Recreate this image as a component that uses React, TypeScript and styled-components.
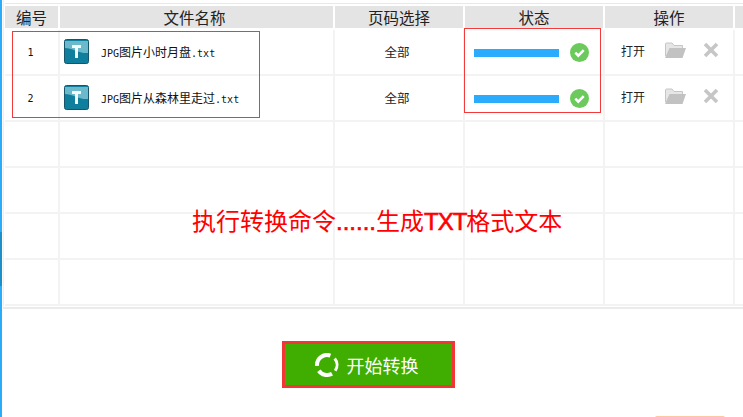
import React from "react";
import styled, { createGlobalStyle } from "styled-components";

const Global = createGlobalStyle`
  html, body { margin: 0; padding: 0; background: #fff; }
  #root { width: 743px; height: 417px; overflow: hidden; }
`;

const COLUMNS = "55px 275px 130px 140px 130px 10px";
const CJK = `"Noto Sans CJK SC", sans-serif`;

const Page = styled.div`
  position: relative;
  display: flex;
  width: 743px;
  height: 417px;
  overflow: hidden;
  background: #fff;
  font-family: ${CJK};
`;

const Strip = styled.div`
  flex: 0 0 2px;
  display: flex;
  flex-direction: column;
  background: #2aabfc;
  &::after {
    content: "";
    height: 54px;
    margin-top: 232px;
    background: #1c8fc9;
  }
`;

const Main = styled.div`
  flex: 1;
  display: flex;
  flex-direction: column;
  min-width: 0;
  padding-left: 1px;
`;

const Table = styled.div`
  position: relative;
  padding-top: 3px;
  border-left: 1px solid #f0f0f0;
  padding-left: 1px;
`;

const HeadRow = styled.div`
  display: grid;
  grid-template-columns: ${COLUMNS};
  height: 25px;
  border-top: 1px solid #e8e8e8;
  box-sizing: border-box;
  padding-top: 2px;
`;

const HeadCell = styled.div`
  display: flex;
  align-items: center;
  justify-content: center;
  margin-right: 2px;
  background: #e4e4e4;
  color: #222;
  font-size: 15.5px;
  line-height: 20px;
  &:nth-child(2) {
    padding-right: 4px;
  }
`;

const Row = styled.div`
  display: grid;
  grid-template-columns: ${COLUMNS};
  height: 46px;
  box-sizing: border-box;
  border-bottom: 2px solid #f3f3f3;
  &:nth-child(2) {
    height: 48px;
    padding-top: 2px;
  }
`;

const Cell = styled.div<{ $align?: string; $nudge?: number }>`
  display: flex;
  align-items: center;
  justify-content: ${(p) => p.$align ?? "center"};
  border-right: 2px solid #f3f3f3;
  padding-right: ${(p) => p.$nudge ?? 0}px;
  font-size: 12.5px;
  color: #222;
`;

const PageCell = styled(Cell)`
  padding-bottom: 2px;
`;

const IndexText = styled.span`
  font-family: "DejaVu Sans Mono", monospace;
  font-size: 10px;
  color: #111;
`;

const FileCell = styled(Cell)`
  padding: 0 0 1px 4px;
`;

const FileName = styled.span`
  margin-left: 12px;
  font-size: 12px;
  color: #111;
  white-space: nowrap;
`;

const Mono = styled.span`
  font-family: "DejaVu Sans Mono", monospace;
  font-size: 10px;
`;

const StatusCell = styled(Cell)`
  padding: 0 0 0 9px;
  gap: 11px;
`;

const Bar = styled.div`
  flex: 0 0 85px;
  height: 8px;
  background: #2aabfc;
  margin-top: 2px;
`;

const ActionCell = styled(Cell)`
  padding: 0 0 4px 16px;
`;

const OpenText = styled.span`
  width: 43px;
  font-size: 12px;
`;

const FolderIcon = styled.svg`
  width: 22px;
  height: 18px;
  margin-right: 17px;
`;

const CloseIcon = styled.svg`
  width: 16px;
  height: 16px;
`;

const Notice = styled.div`
  position: absolute;
  left: 188px;
  top: 205px;
  color: #ff0000;
  font-size: 24px;
  line-height: 30px;
  white-space: nowrap;
`;

const NoticeLatin = styled.span<{ $tight?: boolean }>`
  font-family: "Liberation Sans", sans-serif;
  font-size: 24px;
  letter-spacing: ${(p) => (p.$tight ? "-1px" : "0")};
  -webkit-text-stroke: 0.6px #ff0000;
`;

const Marker = styled.div<{ $left: number; $top: number; $w: number; $h: number }>`
  position: absolute;
  left: ${(p) => p.$left}px;
  top: ${(p) => p.$top}px;
  width: ${(p) => p.$w}px;
  height: ${(p) => p.$h}px;
  box-sizing: border-box;
  border: 1px solid #f23a3a;
`;

const Footer = styled.div`
  position: relative;
  flex: 1;
  display: flex;
  justify-content: center;
  align-items: flex-start;
  padding: 32px 9px 0 0;
  border-top: 2px solid #ebebeb;
  margin-top: 1px;
`;

const StartButton = styled.button`
  display: flex;
  align-items: center;
  justify-content: center;
  gap: 8px;
  width: 173px;
  height: 47px;
  padding: 0 4px 0 0;
  border: 3px solid #f23636;
  background: #3fae00;
  color: #fff;
  font-family: ${CJK};
  font-size: 18px;
`;

const SpinIcon = styled.svg`
  width: 24px;
  height: 24px;
`;

const PeekButton = styled.div`
  position: absolute;
  left: 652px;
  top: 107px;
  width: 70px;
  height: 10px;
  border-radius: 2px;
  background: #ffc9a0;
`;

const TileIcon = () => (
  <svg width="25" height="25" viewBox="0 0 25 25">
    <rect x="0.5" y="0.5" width="24" height="24" rx="2" fill="#0f7f9d" stroke="#17566a" />
    <path d="M1 2h23v12C16 15 8 9 1 9z" fill="#6bb9cb" />
    <path d="M8 6h9v3h-3v10h-3V9H8z" fill="#f2fbfd" />
  </svg>
);

const CheckIcon = () => (
  <svg width="19" height="19" viewBox="0 0 19 19">
    <circle cx="9.5" cy="9.5" r="9.5" fill="#6cc95c" />
    <path d="M5.3 9.6l3 3 5.4-5.4" fill="none" stroke="#fff" strokeWidth="2.6" />
  </svg>
);

const Folder = () => (
  <FolderIcon viewBox="0 0 22 18">
    <path d="M1.500 15V3a1 1 0 0 1 1-1H8l2 2.500h8.500V7" fill="#e6e6e6" stroke="#c6c6c6" />
    <path d="M5.500 7H22l-3.500 10H1z" fill="#c2c2c2" />
  </FolderIcon>
);

const Close = () => (
  <CloseIcon viewBox="0 0 16 16">
    <path d="M2 2l12 12M14 2L2 14" stroke="#c6c6c6" strokeWidth="3.600" />
  </CloseIcon>
);

const Spin = () => (
  <SpinIcon viewBox="0 0 24 24">
    <g fill="none" stroke="#fff">
      <path d="M2.040 12.870A10 10 0 0 1 15.420 2.600" strokeWidth="4" />
      <path d="M19.660 5.570A10 10 0 0 1 20.190 17.740" strokeWidth="3" />
      <path d="M17 20.660A10 10 0 0 1 3.810 17.740" strokeWidth="4" />
    </g>
  </SpinIcon>
);

const headers = ["编号", "文件名称", "页码选择", "状态", "操作", ""];
const files = [
  { id: 1, name: "图片小时月盘" },
  { id: 2, name: "图片从森林里走过" },
];

export default function App() {
  return (
    <Page>
      <Global />
      <Strip />
      <Main>
        <Table>
          <HeadRow>
            {headers.map((h, i) => (
              <HeadCell key={i}>{h}</HeadCell>
            ))}
          </HeadRow>
          {files.map((f) => (
            <Row key={f.id}>
              <Cell $nudge={2}>
                <IndexText>{f.id}</IndexText>
              </Cell>
              <FileCell $align="flex-start">
                <TileIcon />
                <FileName>
                  <Mono>JPG</Mono>
                  {f.name}
                  <Mono>.txt</Mono>
                </FileName>
              </FileCell>
              <PageCell $nudge={4}>全部</PageCell>
              <StatusCell $align="flex-start">
                <Bar />
                <CheckIcon />
              </StatusCell>
              <ActionCell $align="flex-start">
                <OpenText>打开</OpenText>
                <Folder />
                <Close />
              </ActionCell>
              <div />
            </Row>
          ))}
          {[0, 1, 2, 3].map((i) => (
            <Row key={i}>
              <Cell />
              <Cell />
              <Cell />
              <Cell />
              <Cell />
              <div />
            </Row>
          ))}
          <Notice>
            执行转换命令<NoticeLatin>......</NoticeLatin>生成<NoticeLatin $tight>TXT</NoticeLatin>格式文本
          </Notice>
          <Marker $left={8} $top={31} $w={248} $h={87} />
          <Marker $left={460} $top={28} $w={137} $h={85} />
        </Table>
        <Footer>
          <StartButton>
            <Spin />
            开始转换
          </StartButton>
          <PeekButton />
        </Footer>
      </Main>
    </Page>
  );
}
